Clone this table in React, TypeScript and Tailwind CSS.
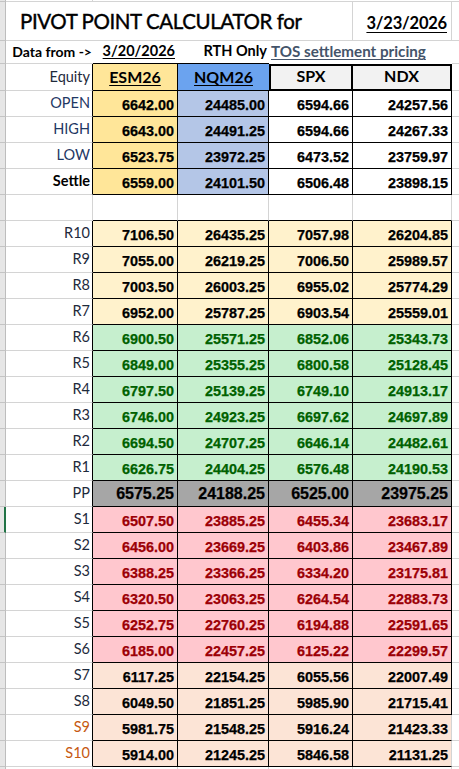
import React from 'react';

type Row = {
  label: string;
  vals: string[];
  bg: string;
  text: string;
  labelCls: string;
  big?: boolean;
  selected?: boolean;
  noRight?: boolean;
};

const W = ['w-[85px]', 'w-[91px]', 'w-[84px]', 'w-[99px]'];

const lato = "font-['Lato','Open_Sans',sans-serif]";
const lbl = `${lato} text-[14.5px] leading-normal`;
const num = "font-['Liberation_Sans',Arial,sans-serif] font-bold leading-[16px] [-webkit-text-stroke:0.25px_currentColor]";

const navy = 'text-[#1f3864]';
const dark = 'text-[#1e2a3c]';

const top: Row[] = [
  { label: 'OPEN', vals: ['6642.00', '24485.00', '6594.66', '24257.56'], bg: '', text: 'text-black', labelCls: navy },
  { label: 'HIGH', vals: ['6643.00', '24491.25', '6594.66', '24267.33'], bg: '', text: 'text-black', labelCls: navy },
  { label: 'LOW', vals: ['6523.75', '23972.25', '6473.52', '23759.97'], bg: '', text: 'text-black', labelCls: navy },
  { label: 'Settle', vals: ['6559.00', '24101.50', '6506.48', '23898.15'], bg: '', text: 'text-black', labelCls: 'text-black font-bold' },
];

const cream = 'bg-[#fff2cc]';
const green = 'bg-[#c6efce]';
const pink = 'bg-[#ffc7ce]';
const peach = 'bg-[#fce4d6]';

const levels: Row[] = [
  { label: 'R10', vals: ['7106.50', '26435.25', '7057.98', '26204.85'], bg: cream, text: 'text-black', labelCls: dark },
  { label: 'R9', vals: ['7055.00', '26219.25', '7006.50', '25989.57'], bg: cream, text: 'text-black', labelCls: dark },
  { label: 'R8', vals: ['7003.50', '26003.25', '6955.02', '25774.29'], bg: cream, text: 'text-black', labelCls: dark },
  { label: 'R7', vals: ['6952.00', '25787.25', '6903.54', '25559.01'], bg: cream, text: 'text-black', labelCls: dark },
  { label: 'R6', vals: ['6900.50', '25571.25', '6852.06', '25343.73'], bg: green, text: 'text-[#006100]', labelCls: dark },
  { label: 'R5', vals: ['6849.00', '25355.25', '6800.58', '25128.45'], bg: green, text: 'text-[#006100]', labelCls: dark },
  { label: 'R4', vals: ['6797.50', '25139.25', '6749.10', '24913.17'], bg: green, text: 'text-[#006100]', labelCls: dark },
  { label: 'R3', vals: ['6746.00', '24923.25', '6697.62', '24697.89'], bg: green, text: 'text-[#006100]', labelCls: dark },
  { label: 'R2', vals: ['6694.50', '24707.25', '6646.14', '24482.61'], bg: green, text: 'text-[#006100]', labelCls: dark },
  { label: 'R1', vals: ['6626.75', '24404.25', '6576.48', '24190.53'], bg: green, text: 'text-[#006100]', labelCls: dark },
  { label: 'PP', vals: ['6575.25', '24188.25', '6525.00', '23975.25'], bg: 'bg-[#a6a6a6]', text: 'text-black', labelCls: dark, big: true },
  { label: 'S1', vals: ['6507.50', '23885.25', '6455.34', '23683.17'], bg: pink, text: 'text-[#9c0006]', labelCls: dark, selected: true },
  { label: 'S2', vals: ['6456.00', '23669.25', '6403.86', '23467.89'], bg: pink, text: 'text-[#9c0006]', labelCls: dark },
  { label: 'S3', vals: ['6388.25', '23366.25', '6334.20', '23175.81'], bg: pink, text: 'text-[#9c0006]', labelCls: dark },
  { label: 'S4', vals: ['6320.50', '23063.25', '6264.54', '22883.73'], bg: pink, text: 'text-[#9c0006]', labelCls: dark },
  { label: 'S5', vals: ['6252.75', '22760.25', '6194.88', '22591.65'], bg: pink, text: 'text-[#9c0006]', labelCls: dark },
  { label: 'S6', vals: ['6185.00', '22457.25', '6125.22', '22299.57'], bg: pink, text: 'text-[#9c0006]', labelCls: dark },
  { label: 'S7', vals: ['6117.25', '22154.25', '6055.56', '22007.49'], bg: peach, text: 'text-black', labelCls: dark },
  { label: 'S8', vals: ['6049.50', '21851.25', '5985.90', '21715.41'], bg: peach, text: 'text-black', labelCls: dark },
  { label: 'S9', vals: ['5981.75', '21548.25', '5916.24', '21423.33'], bg: peach, text: 'text-black', labelCls: 'text-[#c65911]', noRight: true },
  { label: 'S10', vals: ['5914.00', '21245.25', '5846.58', '21131.25'], bg: peach, text: 'text-black', labelCls: 'text-[#c65911]', noRight: true },
];

const TOP_BG = ['bg-[#ffe699]', 'bg-[#b4c6e7]', 'bg-white', 'bg-white'];

function Strip({ selected }: { selected?: boolean }) {
  return (
    <div
      className={`w-[6px] shrink-0 bg-[#e6e6e6] border-b border-b-[#c4c4c4] ${
        selected ? 'border-r-2 border-r-[#217346]' : 'border-r border-r-[#bdbdbd]'
      }`}
    />
  );
}

function DataRow({ r, bgs }: { r: Row; bgs?: string[] }) {
  return (
    <div className="flex h-[26px]">
      <Strip selected={r.selected} />
      <div
        className={`w-[87px] shrink-0 border-b border-b-[#d4d4d4] border-r border-r-black flex items-end justify-end pr-[2px] pb-[2px] ${lbl} ${r.labelCls}`}
      >
        {r.label}
      </div>
      {r.vals.map((v, i) => (
        <div
          key={i}
          className={`${W[i]} shrink-0 ${bgs ? bgs[i] : r.bg} border-b border-b-black border-r ${
            i === 3 && r.noRight ? 'border-r-[#d4d4d4]' : 'border-r-black'
          } flex items-end justify-end pr-[3px] ${r.big ? 'pb-[4px] text-[16px]' : 'pb-[3px] text-[14.4px]'} ${num} ${r.text}`}
        >
          {v}
        </div>
      ))}
      <div className="flex-1 border-b border-b-[#d4d4d4]" />
    </div>
  );
}

export default function App() {
  return (
    <div className="w-[459px] h-[769px] overflow-hidden bg-white text-black">
      {/* sliver of row above */}
      <div className="flex h-[2px]">
        <Strip />
        <div className="w-[87px] shrink-0 border-b border-r border-[#d4d4d4]" />
        <div className="flex-1 border-b border-[#d4d4d4]" />
      </div>

      {/* title row */}
      <div className="flex h-[39px]">
        <Strip />
        <div className="w-[347px] shrink-0 border-b border-r border-[#d4d4d4] flex items-end pl-[14px] pb-[3px]">
          <span className={`${lato} text-[20.5px] tracking-[-0.4px] leading-normal whitespace-nowrap [-webkit-text-stroke:0.4px_black]`}>
            PIVOT POINT CALCULATOR for
          </span>
        </div>
        <div className="w-[99px] shrink-0 border-b border-r border-[#d4d4d4] flex items-end justify-end pr-[4px] pb-[4px]">
          <span className={`${lato} text-[16.5px] tracking-[-0.2px] font-bold underline underline-offset-[3px] leading-normal`}>
            3/23/2026
          </span>
        </div>
        <div className="flex-1 border-b border-[#d4d4d4]" />
      </div>

      {/* data from row */}
      <div className="flex h-[23px]">
        <Strip />
        <div className="w-[87px] shrink-0 border-b border-[#d4d4d4] flex items-end justify-end pr-[1px] pb-[1px]">
          <span className={`${lato} text-[14px] font-bold leading-normal whitespace-nowrap`}>
            Data from -&gt;
          </span>
        </div>
        <div className="w-[85px] shrink-0 border-b border-black flex items-end justify-end pr-[3px] pb-[1px]">
          <span className={`${lato} text-[14.5px] font-bold underline underline-offset-[2px] leading-normal`}>
            3/20/2026
          </span>
        </div>
        <div className="w-[91px] shrink-0 border-b border-black flex items-end justify-end pr-[2px] pb-[1px]">
          <span className={`${lato} text-[14.5px] font-bold leading-normal whitespace-nowrap`}>
            RTH Only
          </span>
        </div>
        <div className="w-[84px] shrink-0 flex items-end pl-[2px] pb-[1px] overflow-visible">
          <span className={`${lato} text-[15.2px] font-bold text-[#44546a] underline underline-offset-[2px] leading-normal whitespace-nowrap`}>
            TOS settlement pricing
          </span>
        </div>
        <div className="w-[99px] shrink-0" />
        <div className="flex-1 border-b border-[#d4d4d4]" />
      </div>

      {/* header row */}
      <div className="flex h-[27px]">
        <Strip />
        <div className={`w-[87px] shrink-0 border-b border-b-[#d4d4d4] border-r border-r-black flex items-end justify-end pr-[2px] pb-[2px] ${lbl} ${dark}`}>
          Equity
        </div>
        <div className="w-[85px] shrink-0 bg-[#ffe699] border-b border-r border-black flex items-end justify-center pb-[1px]">
          <span className={`${lato} text-[16px] font-bold underline underline-offset-[2px] leading-normal`}>ESM26</span>
        </div>
        <div className="w-[91px] shrink-0 bg-[#6ba3ef] border-b border-black flex items-end justify-center pb-[1px]">
          <span className={`${lato} text-[16px] font-bold underline underline-offset-[2px] leading-normal`}>NQM26</span>
        </div>
        <div className="w-[84px] shrink-0 bg-[#f2f2f2] border-2 border-black flex items-end justify-center pb-[1px]">
          <span className={`${lato} text-[16px] font-bold leading-normal`}>SPX</span>
        </div>
        <div className="w-[99px] shrink-0 bg-[#f2f2f2] border-y-2 border-r-2 border-black flex items-end justify-center pb-[1px]">
          <span className={`${lato} text-[16px] font-bold leading-normal`}>NDX</span>
        </div>
        <div className="flex-1 border-b border-[#d4d4d4]" />
      </div>

      {top.map((r, i) => (
        <DataRow key={i} r={r} bgs={TOP_BG} />
      ))}

      {/* blank row */}
      <div className="flex h-[26px]">
        <Strip />
        <div className="w-[87px] shrink-0 border-b border-r border-[#d4d4d4]" />
        {W.map((w, i) => (
          <div key={i} className={`${w} shrink-0 border-b border-b-black border-r border-r-[#d4d4d4]`} />
        ))}
        <div className="flex-1 border-b border-[#d4d4d4]" />
      </div>

      {levels.map((r, i) => (
        <DataRow key={i} r={r} />
      ))}

      <div className="flex h-[10px]">
        <Strip />
        <div className="w-[87px] shrink-0 border-r border-[#d4d4d4]" />
        {W.map((w, i) => (
          <div key={i} className={`${w} shrink-0 border-r border-[#d4d4d4]`} />
        ))}
        <div className="flex-1" />
      </div>
    </div>
  );
}
